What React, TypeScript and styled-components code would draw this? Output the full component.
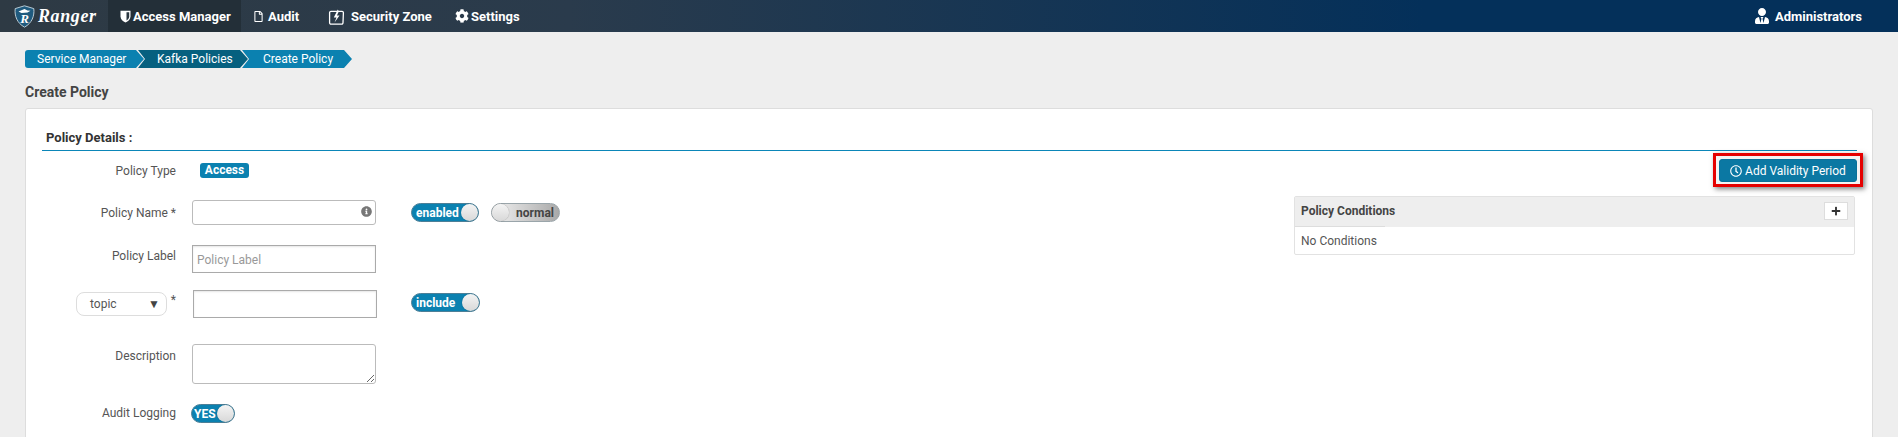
import React from 'react';
import styled, { createGlobalStyle } from 'styled-components';
import { FaRegFile, FaCog, FaInfoCircle, FaRegClock, FaPlus, FaUserTie } from 'react-icons/fa';

const GlobalStyle = createGlobalStyle`
  html, body {
    margin: 0;
    height: 100%;
    overflow: hidden;
    background: #eeeeee;
    font-family: Roboto, 'Liberation Sans', sans-serif;
    font-size: 12px;
    color: #4a4a4a;
  }
`;

function Logo() {
  return (
    <svg width="21" height="23" viewBox="0 0 21 23">
      <path d="M10.5 0.8 L19.8 3.6 C20.6 11 18 18 10.5 22.2 C3 18 0.4 11 1.2 3.6 Z" fill="#1f5a7e" stroke="#b9cad4" strokeWidth="1" />
      <path d="M4.5 6.5 L10.5 4 L13.5 5.4 L16.5 5.8 L13.5 7.4 L7.5 8 Z" fill="#ffffff" />
      <text x="10.5" y="18" textAnchor="middle" fontFamily="'Liberation Serif', serif" fontStyle="italic" fontWeight="700" fontSize="13" fill="#ffffff">
        R
      </text>
    </svg>
  );
}

function ShieldIcon() {
  return (
    <svg width="11" height="13" viewBox="0 0 11 13">
      <path d="M0.5 0.8 H10.5 V6.5 C10.5 9.5 8 11.5 5.5 12.6 C3 11.5 0.5 9.5 0.5 6.5 Z" fill="#ffffff" />
      <path d="M6.5 2.2 H9.2 V6.5 C9.2 8.2 8 9.6 6.5 10.6 Z" fill="#2a3640" />
    </svg>
  );
}

function ZoneIcon() {
  return (
    <svg width="17" height="17" viewBox="0 0 17 17">
      <path d="M3 3.4 H14 a1.3 1.3 0 0 1 1.4 1.3 L15 14.8 a1.3 1.3 0 0 1 -1.4 1.3 H3 a1.3 1.3 0 0 1 -1.4 -1.3 L1.6 4.7 A1.3 1.3 0 0 1 3 3.4 Z" fill="none" stroke="#ffffff" strokeWidth="1.3" />
      <path d="M9.8 1.5 L5.8 9.5 H8.5 L6.5 14.5 L11.5 7.5 H8.9 L10.8 3.4 Z" fill="#ffffff" />
    </svg>
  );
}

function App() {
  return (
    <>
      <GlobalStyle />
      <TopNav>
        <Brand>
          <Logo />
          <BrandName>Ranger</BrandName>
        </Brand>
        <NavItem $active $width={133} $pad={12} $gap={2}>
          <ShieldIcon />
          Access Manager
        </NavItem>
        <NavItem $width={78} $pad={12} $gap={4}>
          <FaRegFile size={11} />
          Audit
        </NavItem>
        <NavItem $width={125} $pad={9} $gap={6}>
          <ZoneIcon />
          Security Zone
        </NavItem>
        <NavItem $width={90} $pad={11} $gap={2}>
          <FaCog size={14} />
          Settings
        </NavItem>
        <NavRight>
          <FaUserTie size={16} />
          Administrators
        </NavRight>
      </TopNav>
      <Page>
        <Crumbs>
          <Crumb $width={119} $pad={12}>Service Manager</Crumb>
          <Crumb $width={110} $pad={19} $dark>Kafka Policies</Crumb>
          <Crumb $width={110} $pad={21}>Create Policy</Crumb>
        </Crumbs>
        <Heading>Create Policy</Heading>
        <Card>
          <SectionTitle>Policy Details :</SectionTitle>
          <Columns>
            <FormColumn>
              <Row $top={12} $height={16}>
                <Label>Policy Type</Label>
                <Badge>Access</Badge>
              </Row>
              <Row $top={21} $height={25}>
                <Label>Policy Name *</Label>
                <InputWrap>
                  <TextBox />
                  <InputIcon>
                    <FaInfoCircle size={11} />
                  </InputIcon>
                </InputWrap>
                <Toggles>
                  <Toggle $on $width={68}>
                    <ToggleText>enabled</ToggleText>
                    <Knob />
                  </Toggle>
                  <Toggle $width={69}>
                    <Knob />
                    <ToggleText>normal</ToggleText>
                  </Toggle>
                </Toggles>
              </Row>
              <Row $top={20} $height={28}>
                <Label $pad={2}>Policy Label</Label>
                <SquareBox placeholder="Policy Label" />
              </Row>
              <Row $top={17} $height={28}>
                <ResourceLabel>
                  <SelectBox>
                    topic
                    <SelectArrow>▼</SelectArrow>
                  </SelectBox>
                  <Required>*</Required>
                </ResourceLabel>
                <SquareBox $shift />
                <Toggles $shift>
                  <Toggle $on $width={69}>
                    <ToggleText>include</ToggleText>
                    <Knob />
                  </Toggle>
                </Toggles>
              </Row>
              <Row $top={26} $height={40}>
                <Label $pad={3}>Description</Label>
                <AreaBox />
              </Row>
              <Row $top={20} $height={18}>
                <Label>Audit Logging</Label>
                <Toggle $on $width={44} $tight>
                  <ToggleText>YES</ToggleText>
                  <Knob />
                </Toggle>
              </Row>
            </FormColumn>
            <SideColumn>
              <Highlight>
                <ValidityButton>
                  <FaRegClock size={12} />
                  Add Validity Period
                </ValidityButton>
              </Highlight>
              <Conditions>
                <ConditionsHead>
                  Policy Conditions
                  <AddButton>
                    <FaPlus size={10} />
                  </AddButton>
                </ConditionsHead>
                <ConditionsBody>No Conditions</ConditionsBody>
              </Conditions>
            </SideColumn>
          </Columns>
        </Card>
      </Page>
    </>
  );
}

const TopNav = styled.div`
  height: 32px;
  display: flex;
  align-items: stretch;
  background: linear-gradient(to right, #2e3a44 0%, #2a3b4c 30%, #04305a 75%, #04305a 100%);
  color: #ffffff;
  font-weight: 700;
  font-size: 13px;
`;
const Brand = styled.div`
  width: 108px;
  box-sizing: border-box;
  padding-left: 14px;
  display: flex;
  align-items: center;
  gap: 3px;
`;
const BrandName = styled.span`
  font-family: 'Liberation Serif', serif;
  font-style: italic;
  font-weight: 700;
  font-size: 18px;
  letter-spacing: 0.6px;
`;
const NavItem = styled.div<{ $active?: boolean; $width: number; $pad: number; $gap: number }>`
  width: ${(p) => p.$width}px;
  box-sizing: border-box;
  padding-left: ${(p) => p.$pad}px;
  display: flex;
  align-items: center;
  gap: ${(p) => p.$gap}px;
  white-space: nowrap;
  background: ${(p) => (p.$active ? '#232f38' : 'transparent')};
`;
const NavRight = styled.div`
  margin-left: auto;
  padding-right: 36px;
  display: flex;
  align-items: center;
  gap: 5px;
`;
const Page = styled.div`
  height: 405px;
  box-sizing: border-box;
  overflow: hidden;
  padding: 18px 25px 0 25px;
`;
const Crumbs = styled.div`
  display: flex;
  height: 18px;
`;
const Crumb = styled.div<{ $dark?: boolean; $width: number; $pad: number }>`
  width: ${(p) => p.$width}px;
  box-sizing: border-box;
  padding-left: ${(p) => p.$pad}px;
  line-height: 18px;
  color: #ffffff;
  font-size: 12px;
  white-space: nowrap;
  background: ${(p) => (p.$dark ? '#06607f' : '#0b81b0')};
  clip-path: polygon(0 0, calc(100% - 8px) 0, 100% 50%, calc(100% - 8px) 100%, 0 100%, 7px 50%);
  margin-right: -6px;
  &:first-child {
    border-radius: 3px 0 0 3px;
    clip-path: polygon(0 0, calc(100% - 8px) 0, 100% 50%, calc(100% - 8px) 100%, 0 100%);
  }
`;
const Heading = styled.div`
  margin-top: 14px;
  height: 20px;
  line-height: 20px;
  font-size: 14px;
  font-weight: 700;
  color: #444444;
`;
const Card = styled.div`
  margin-top: 6px;
  height: 400px;
  padding: 20px 15px 0 16px;
  background: #ffffff;
  border: 1px solid #dddddd;
  border-radius: 3px;
`;
const SectionTitle = styled.div`
  height: 21px;
  line-height: 17px;
  padding-left: 4px;
  font-size: 13px;
  font-weight: 700;
  color: #333333;
  border-bottom: 1px solid #0b86b8;
`;
const Columns = styled.div`
  display: flex;
  justify-content: space-between;
`;
const FormColumn = styled.div`
  display: flex;
  flex-direction: column;
`;
const Row = styled.div<{ $top: number; $height: number }>`
  margin-top: ${(p) => p.$top}px;
  height: ${(p) => p.$height}px;
  display: flex;
  align-items: flex-start;
  gap: 16px;
`;
const Label = styled.div<{ $pad?: number }>`
  width: 134px;
  padding-top: ${(p) => p.$pad ?? 0}px;
  line-height: ${(p) => (p.$pad ? '18px' : 'inherit')};
  text-align: right;
  align-self: ${(p) => (p.$pad ? 'flex-start' : 'center')};
  color: #555555;
`;
const Badge = styled.span`
  width: 49px;
  height: 15px;
  line-height: 14px;
  text-align: center;
  margin-left: 8px;
  background: #0b81b0;
  color: #ffffff;
  font-weight: 700;
  font-size: 12px;
  border-radius: 3px;
`;
const InputWrap = styled.div`
  position: relative;
  width: 184px;
  height: 25px;
`;
const TextBox = styled.input`
  width: 100%;
  height: 100%;
  box-sizing: border-box;
  border: 1px solid #bbbbbb;
  border-radius: 3px;
  outline: none;
  background: #ffffff;
`;
const InputIcon = styled.span`
  position: absolute;
  right: 4px;
  top: 6px;
  color: #777777;
`;
const SquareBox = styled.input<{ $shift?: boolean }>`
  width: 184px;
  height: 28px;
  box-sizing: border-box;
  margin-left: ${(p) => (p.$shift ? '1px' : '0')};
  padding: 2px 4px 0;
  border: 1px solid #aaaaaa;
  box-shadow: inset 0 1px 2px rgba(0, 0, 0, 0.1);
  outline: none;
  font-family: inherit;
  font-size: 12px;
  &::placeholder {
    color: #999999;
  }
`;
const AreaBox = styled.textarea`
  width: 184px;
  height: 40px;
  box-sizing: border-box;
  border: 1px solid #bbbbbb;
  border-radius: 3px;
  outline: none;
  margin: 0;
`;
const Toggles = styled.div<{ $shift?: boolean }>`
  margin-left: ${(p) => (p.$shift ? '18px' : '19px')};
  margin-top: 3px;
  display: flex;
  gap: 12px;
`;
const Toggle = styled.div<{ $on?: boolean; $width: number; $tight?: boolean }>`
  width: ${(p) => p.$width}px;
  height: 19px;
  box-sizing: border-box;
  display: flex;
  align-items: center;
  justify-content: space-between;
  padding-left: ${(p) => (p.$on ? (p.$tight ? '2px' : '4px') : '0')};
  padding-right: ${(p) => (p.$on ? '0' : '5px')};
  border-radius: 10px;
  border: 1px solid ${(p) => (p.$on ? '#4c7f97' : '#9aa5aa')};
  color: ${(p) => (p.$on ? '#ffffff' : '#444444')};
  background: ${(p) => (p.$on ? '#0b81b0' : 'linear-gradient(to right, #f2f2f2, #a9a9a9)')};
  font-weight: 700;
  font-size: 12px;
  margin-left: ${(p) => (p.$tight ? '-1px' : '0')};
`;
const ToggleText = styled.span`
  white-space: nowrap;
`;
const Knob = styled.span`
  width: 17px;
  height: 17px;
  flex: none;
  border-radius: 50%;
  background: linear-gradient(to bottom, #f4f4f4, #d8d8d8);
  box-shadow: 0 0 1px rgba(0, 0, 0, 0.5);
`;
const ResourceLabel = styled.div`
  width: 100px;
  margin-left: 34px;
  display: flex;
  gap: 4px;
  color: #555555;
  padding-top: 2px;
`;
const Required = styled.span`
  padding-top: 1px;
`;
const SelectBox = styled.div`
  width: 91px;
  height: 24px;
  box-sizing: border-box;
  padding: 0 6px 0 13px;
  display: flex;
  align-items: center;
  justify-content: space-between;
  border: 1px solid #dddddd;
  border-radius: 8px;
  background: #ffffff;
`;
const SelectArrow = styled.span`
  font-size: 12px;
  color: #444444;
`;
const SideColumn = styled.div`
  display: flex;
  flex-direction: column;
  align-items: flex-end;
`;
const Highlight = styled.div`
  margin: 2px -6px 0 0;
  padding: 3px 3px 2px 3px;
  border: 3px solid #e50000;
  background: #f4f4f4;
  box-shadow: 2px 2px 5px rgba(0, 0, 0, 0.5);
`;
const ValidityButton = styled.button`
  display: flex;
  width: 138px;
  height: 23px;
  padding: 0;
  align-items: center;
  justify-content: center;
  gap: 3px;
  border: 1px solid #0a7199;
  border-radius: 3px;
  background: #0b78a3;
  color: #ffffff;
  font-family: inherit;
  font-size: 12px;
`;
const Conditions = styled.div`
  margin-top: 9px;
  margin-right: 2px;
  width: 561px;
  height: 59px;
  box-sizing: border-box;
  border: 1px solid #e2e2e2;
  border-radius: 2px;
`;
const ConditionsHead = styled.div`
  position: relative;
  height: 30px;
  box-sizing: border-box;
  padding: 0 6px 2px;
  display: flex;
  align-items: center;
  justify-content: space-between;
  background: #eeeeee;
  font-weight: 700;
  color: #444444;
  &::after {
    content: '';
    position: absolute;
    left: 0;
    bottom: 0;
    width: 90px;
    height: 1px;
    background: #dddddd;
  }
`;
const AddButton = styled.span`
  width: 24px;
  height: 18px;
  display: flex;
  align-items: center;
  justify-content: center;
  background: #ffffff;
  border: 1px solid #dddddd;
  box-sizing: border-box;
  color: #333333;
`;
const ConditionsBody = styled.div`
  padding: 7px 6px;
  color: #555555;
`;

export default App;
